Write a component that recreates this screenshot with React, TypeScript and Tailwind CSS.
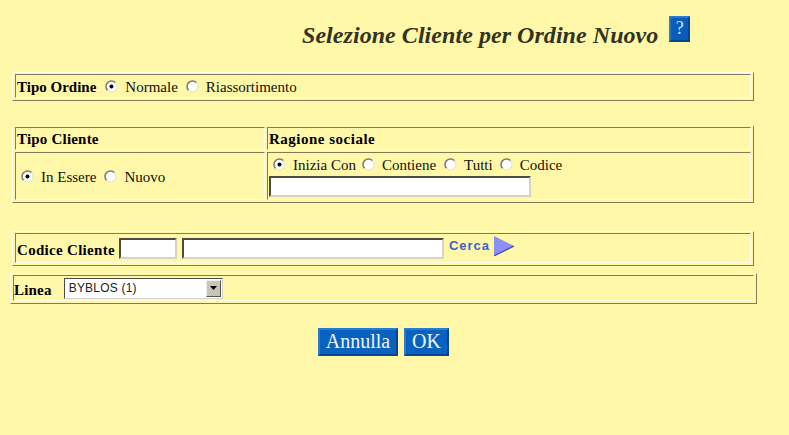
function Radio({ checked = false }: { checked?: boolean }) {
  return (
    <svg width="13" height="13" viewBox="0 0 13 13" className="shrink-0">
      <circle cx="6.5" cy="6.5" r="5.5" fill="#ffffff" />
      <path d="M2.6 10.4A5.5 5.5 0 0 1 10.4 2.6" fill="none" stroke="#7c7c74" strokeWidth="1.5" />
      <path d="M10.4 2.6A5.5 5.5 0 0 1 2.6 10.4" fill="none" stroke="#e8e4c8" strokeWidth="1.2" />
      {checked && <circle cx="6.5" cy="6.5" r="2" fill="#000000" />}
    </svg>
  );
}

function Outer({ className, children }: { className: string; children: React.ReactNode }) {
  return (
    <div className={`border border-t-[#fffde8] border-l-[#fffde8] border-r-[#827b5c] border-b-[#827b5c] px-[2px] pt-[1px] pb-[2px] ${className}`}>
      {children}
    </div>
  );
}

function Cell({ className, children }: { className: string; children: React.ReactNode }) {
  return (
    <div className={`border border-t-[#827b5c] border-l-[#827b5c] border-r-[#fffde8] border-b-[#fffde8] flex items-center ${className}`}>
      {children}
    </div>
  );
}

function Choice({ label, checked, className }: { label: string; checked?: boolean; className: string }) {
  return (
    <span className={`flex items-center ${className}`}>
      <Radio checked={checked} />
      <span className="ml-[7px] mt-[2px] text-[15px] leading-none text-[#111]">{label}</span>
    </span>
  );
}

function TextBox({ className }: { className: string }) {
  return <div className={`bg-white border-2 border-t-[#4d4a40] border-l-[#4d4a40] border-r-[#d8d4c0] border-b-[#d8d4c0] ${className}`} />;
}

function Btn({ label, className }: { label: string; className: string }) {
  return (
    <div className={`h-[28px] pb-[3px] flex items-center justify-center bg-[#0a62c0] border-2 border-t-[#2a7ad0] border-l-[#2a7ad0] border-r-[#07468f] border-b-[#07468f] text-[#eef5ff] text-[20px] ${className}`}>
      {label}
    </div>
  );
}

export default function App() {
  return (
    <div className="w-[789px] h-[435px] overflow-hidden bg-[#fff8a9] flex flex-col font-['Liberation_Serif',serif] text-black">
      <div className="h-[72px] flex items-start pl-[302px]">
        <h1 className="mt-[21px] text-[24px] leading-[28px] font-bold italic text-[#333322] tracking-[0.05px] whitespace-nowrap">
          Selezione Cliente per Ordine Nuovo
        </h1>
        <div className="ml-[11px] mt-[16px] w-[21px] h-[26px] pb-[3px] flex items-center justify-center bg-[#0a5cb8] border-2 border-t-[#2a7ad0] border-l-[#2a7ad0] border-r-[#07468f] border-b-[#07468f] text-[#cfe3ff] text-[18px] leading-none">
          ?
        </div>
      </div>

      <Outer className="ml-[12px] w-[742px] h-[29px]">
        <Cell className="h-full pl-[1px]">
          <b className="text-[15px] leading-none mt-[2px]">Tipo Ordine</b>
          <Choice label="Normale" checked className="ml-[9px]" />
          <Choice label="Riassortimento" className="ml-[8px]" />
        </Cell>
      </Outer>

      <Outer className="mt-[24px] ml-[12px] w-[742px] h-[78px] flex flex-col gap-[2px]">
        <div className="flex gap-[2px] h-[23px]">
          <Cell className="w-[250px] pl-[1px]">
            <b className="text-[15px] tracking-[0.2px] leading-none mt-[2px]">Tipo Cliente</b>
          </Cell>
          <Cell className="flex-1 pl-[1px]">
            <b className="text-[15px] tracking-[0.5px] leading-none mt-[2px]">Ragione sociale</b>
          </Cell>
        </div>
        <div className="flex gap-[2px] flex-1">
          <Cell className="w-[250px] pl-[5px]">
            <Choice label="In Essere" checked />
            <Choice label="Nuovo" className="ml-[8px]" />
          </Cell>
          <div className="flex-1 border border-t-[#827b5c] border-l-[#827b5c] border-r-[#fffde8] border-b-[#fffde8] pl-[1px] pt-[3px]">
            <div className="flex items-center pl-[4px]">
              <Choice label="Inizia Con" checked />
              <Choice label="Contiene" className="ml-[6px]" />
              <Choice label="Tutti" className="ml-[8px]" />
              <Choice label="Codice" className="ml-[7px]" />
            </div>
            <TextBox className="mt-[3px] w-[262px] h-[21px]" />
          </div>
        </div>
      </Outer>

      <Outer className="mt-[28px] ml-[12px] w-[742px] h-[35px]">
        <Cell className="h-full pl-[1px]">
          <b className="text-[15px] tracking-[0.3px] leading-none mt-[5px]">Codice Cliente</b>
          <TextBox className="ml-[4px] w-[58px] h-[21px]" />
          <TextBox className="ml-[5px] w-[262px] h-[21px]" />
          <span className="ml-[5px] font-['Liberation_Sans',sans-serif] font-bold text-[13px] tracking-[1px] text-[#3f5fd0] leading-none mb-[5px]">Cerca</span>
          <svg width="20" height="20" viewBox="0 0 20 20" className="ml-[4px] mb-[5px]">
            <path d="M0 0L20 10L0 20Z" fill="#8c90f4" />
            <path d="M0 20L20 10" stroke="#4a4ab0" strokeWidth="1.2" />
          </svg>
        </Cell>
      </Outer>

      <Outer className="mt-[7px] ml-[10px] w-[747px] h-[31px]">
        <Cell className="h-full">
          <b className="text-[15px] tracking-[0.2px] leading-none mt-[5px]">Linea</b>
          <div className="ml-[12px] w-[159px] h-[21px] bg-white border border-t-[#4d4a40] border-l-[#4d4a40] border-r-[#d8d4c0] border-b-[#d8d4c0] flex items-center justify-between pl-[4px] pr-[1px]">
            <span className="font-['Liberation_Sans',sans-serif] text-[12px] tracking-[0.2px] leading-none text-[#222]">BYBLOS (1)</span>
            <div className="w-[15px] h-[17px] bg-[#c8c6bc] border border-t-[#f0f0e8] border-l-[#f0f0e8] border-r-[#55554c] border-b-[#55554c] flex items-center justify-center">
              <svg width="7" height="4" viewBox="0 0 7 4"><path d="M0 0H7L3.5 4Z" fill="#000" /></svg>
            </div>
          </div>
        </Cell>
      </Outer>

      <div className="mt-[24px] flex pl-[318px] gap-[6px]">
        <Btn label="Annulla" className="w-[80px]" />
        <Btn label="OK" className="w-[45px]" />
      </div>
    </div>
  );
}
